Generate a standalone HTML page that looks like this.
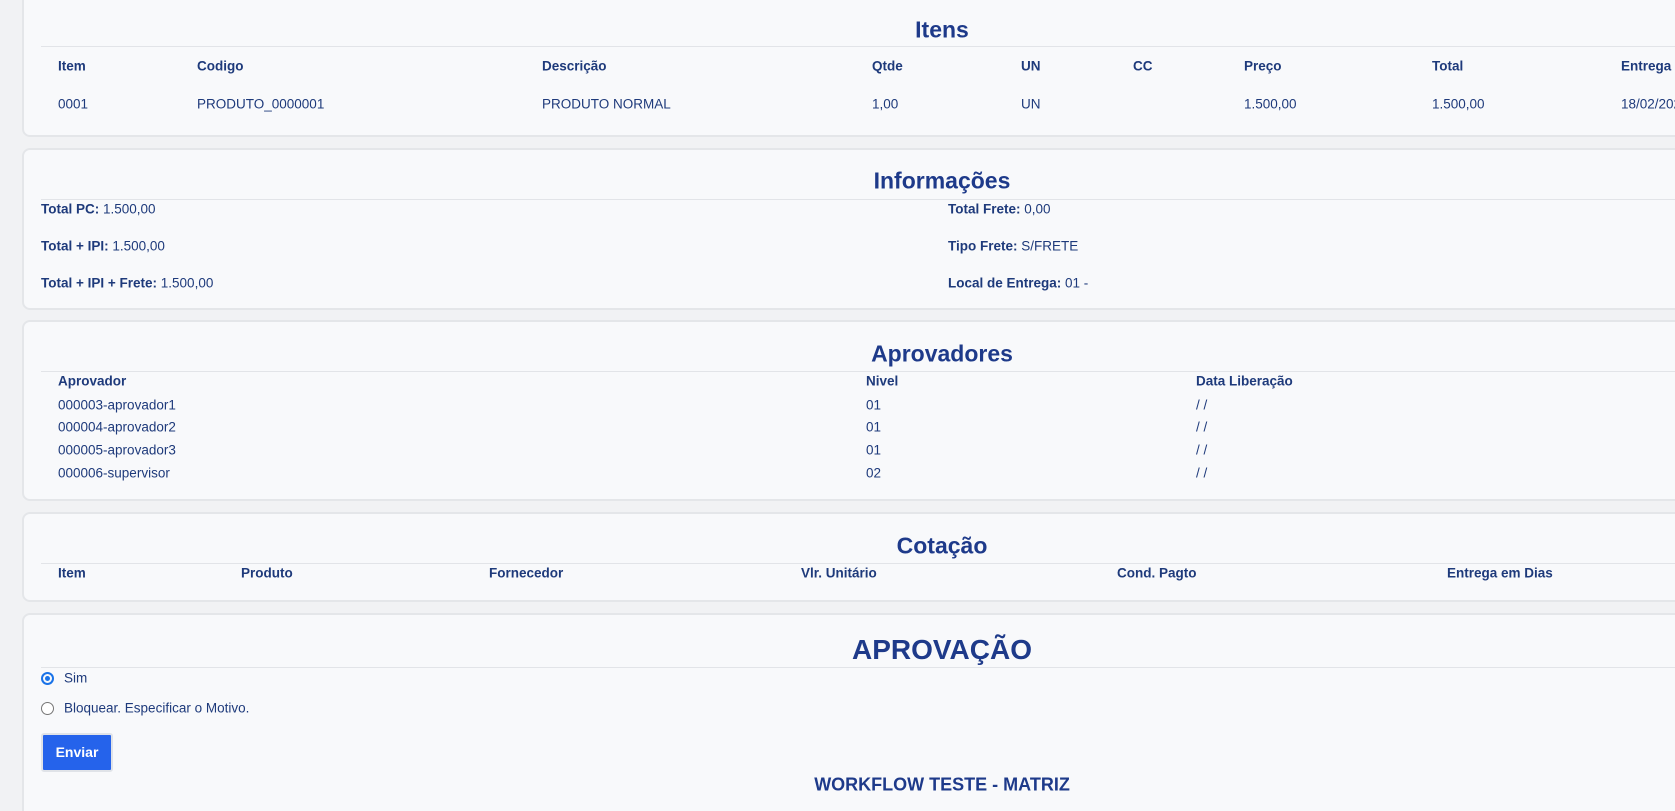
<!DOCTYPE html>
<html><head><meta charset="utf-8"><style>
*{box-sizing:border-box;margin:0;padding:0}
html,body{width:1675px;height:811px;overflow:hidden;background:#f1f2f4;font-family:"Liberation Sans",Arial,sans-serif;color:#1e3a7b}
#w{position:relative;width:1675px;height:811px;overflow:hidden}
.card{position:absolute;left:22px;width:1840px;background:#f8f9fb;border:2px solid #e4e6e9;border-radius:8px}
.t{position:absolute;left:0;width:100%;text-align:center;font-size:23px;font-weight:bold;color:#1e3a8a;transform:translateY(-50%)}
.ln{position:absolute;left:17px;right:0;height:1px;background:#e2e4e8}
.x{position:absolute;font-size:13.5px;white-space:nowrap;transform:translateY(-50%)}
.b{font-weight:bold}
</style></head><body><div id="w">

<div class="card" style="top:-10px;height:147px">
<div class="t" style="top:38px">Itens</div>
<div class="ln" style="top:54px"></div>
<div class="x b" style="left:34px;top:74px">Item</div>
<div class="x b" style="left:173px;top:74px">Codigo</div>
<div class="x b" style="left:518px;top:74px">Descrição</div>
<div class="x b" style="left:848px;top:74px">Qtde</div>
<div class="x b" style="left:997px;top:74px">UN</div>
<div class="x b" style="left:1109px;top:74px">CC</div>
<div class="x b" style="left:1220px;top:74px">Preço</div>
<div class="x b" style="left:1408px;top:74px">Total</div>
<div class="x b" style="left:1597px;top:74px">Entrega</div>
<div class="x" style="left:34px;top:112px">0001</div>
<div class="x" style="left:173px;top:112px">PRODUTO_0000001</div>
<div class="x" style="left:518px;top:112px">PRODUTO NORMAL</div>
<div class="x" style="left:848px;top:112px">1,00</div>
<div class="x" style="left:997px;top:112px">UN</div>
<div class="x" style="left:1220px;top:112px">1.500,00</div>
<div class="x" style="left:1408px;top:112px">1.500,00</div>
<div class="x" style="left:1597px;top:112px">18/02/2025</div>
</div>

<div class="card" style="top:148px;height:162px">
<div class="t" style="top:31px">Informações</div>
<div class="ln" style="top:49px"></div>
<div class="x" style="left:17px;top:59px"><b>Total PC:</b> 1.500,00</div>
<div class="x" style="left:17px;top:96px"><b>Total + IPI:</b> 1.500,00</div>
<div class="x" style="left:17px;top:133px"><b>Total + IPI + Frete:</b> 1.500,00</div>
<div class="x" style="left:924px;top:59px"><b>Total Frete:</b> 0,00</div>
<div class="x" style="left:924px;top:96px"><b>Tipo Frete:</b> S/FRETE</div>
<div class="x" style="left:924px;top:133px"><b>Local de Entrega:</b> 01 -</div>
</div>

<div class="card" style="top:320px;height:181px">
<div class="t" style="top:32px">Aprovadores</div>
<div class="ln" style="top:49px"></div>
<div class="x b" style="left:34px;top:59px">Aprovador</div>
<div class="x b" style="left:842px;top:59px">Nivel</div>
<div class="x b" style="left:1172px;top:59px">Data Liberação</div>
<div class="x" style="left:34px;top:83px">000003-aprovador1</div>
<div class="x" style="left:842px;top:83px">01</div>
<div class="x" style="left:1172px;top:83px">/ /</div>
<div class="x" style="left:34px;top:105px">000004-aprovador2</div>
<div class="x" style="left:842px;top:105px">01</div>
<div class="x" style="left:1172px;top:105px">/ /</div>
<div class="x" style="left:34px;top:128px">000005-aprovador3</div>
<div class="x" style="left:842px;top:128px">01</div>
<div class="x" style="left:1172px;top:128px">/ /</div>
<div class="x" style="left:34px;top:151px">000006-supervisor</div>
<div class="x" style="left:842px;top:151px">02</div>
<div class="x" style="left:1172px;top:151px">/ /</div>
</div>

<div class="card" style="top:512px;height:90px">
<div class="t" style="top:32px">Cotação</div>
<div class="ln" style="top:49px"></div>
<div class="x b" style="left:34px;top:59px">Item</div>
<div class="x b" style="left:217px;top:59px">Produto</div>
<div class="x b" style="left:465px;top:59px">Fornecedor</div>
<div class="x b" style="left:777px;top:59px">Vlr. Unitário</div>
<div class="x b" style="left:1093px;top:59px">Cond. Pagto</div>
<div class="x b" style="left:1423px;top:59px">Entrega em Dias</div>
</div>

<div class="card" style="top:613px;height:210px">
<div class="t" style="top:35px;font-size:28px">APROVAÇÃO</div>
<div class="ln" style="top:52px"></div>
<div style="position:absolute;left:17px;top:57px;width:13px;height:13px;border:2px solid #1a73e8;border-radius:50%"><div style="position:absolute;left:2px;top:2px;width:5px;height:5px;background:#1a73e8;border-radius:50%"></div></div>
<div class="x" style="left:40px;top:63px">Sim</div>
<div style="position:absolute;left:17px;top:87px;width:13px;height:13px;border:1px solid #767676;border-radius:50%;background:#fff"></div>
<div class="x" style="left:40px;top:93px">Bloquear. Especificar o Motivo.</div>
<div style="position:absolute;left:17px;top:118px;width:72px;height:39px;background:#2563eb;border:2px solid #e0e3e8;border-radius:3px;color:#fff;font-weight:bold;font-size:14px;line-height:35px;text-align:center">Enviar</div>
<div class="x b" style="left:0;width:1836px;text-align:center;top:170px;font-size:18px;color:#1e3a8a">WORKFLOW TESTE - MATRIZ</div>
</div>
</div></body></html>
